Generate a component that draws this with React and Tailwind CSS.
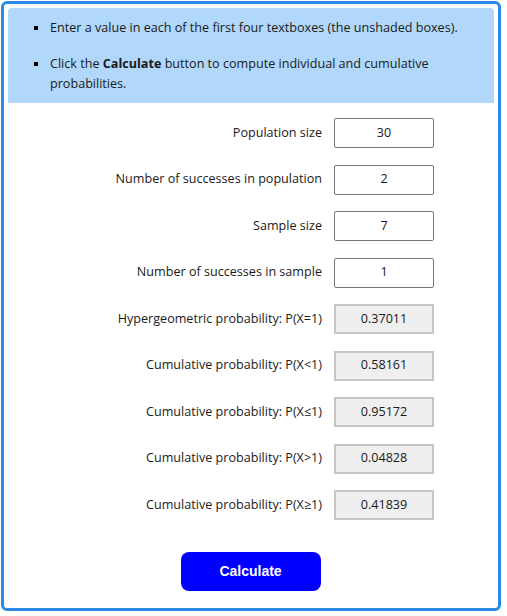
export default function App() {
  const rows = [
    { label: "Population size", value: "30", out: false },
    { label: "Number of successes in population", value: "2", out: false },
    { label: "Sample size", value: "7", out: false },
    { label: "Number of successes in sample", value: "1", out: false },
    { label: "Hypergeometric probability: P(X=1)", value: "0.37011", out: true },
    { label: "Cumulative probability: P(X<1)", value: "0.58161", out: true },
    { label: "Cumulative probability: P(X\u22641)", value: "0.95172", out: true },
    { label: "Cumulative probability: P(X>1)", value: "0.04828", out: true },
    { label: "Cumulative probability: P(X\u22651)", value: "0.41839", out: true },
  ];
  return (
    <div className="bg-white w-[507px] h-[616px] pt-[1px] pl-[1px]" style={{ fontFamily: '"Open Sans", "Noto Sans", sans-serif' }}>
      <div className="w-[500px] h-[610px] border-[3px] border-[#2a8ae6] rounded-[6px] p-[4px] text-[#1a1a1a]">
        <div className="bg-[#b1d8fb] rounded-t-[4px] h-[95px] pl-[26px] pr-3 pt-[10px] text-[12.6px] leading-[20px]">
          <div className="flex">
            <span className="w-[16px] shrink-0 flex items-center"><span className="block w-[4px] h-[4px] bg-black"></span></span>
            <span>Enter a value in each of the first four textboxes (the unshaded boxes).</span>
          </div>
          <div className="flex mt-[16px]">
            <span className="w-[16px] shrink-0 flex h-[20px] items-center"><span className="block w-[4px] h-[4px] bg-black"></span></span>
            <p className="pr-[40px]">Click the <b>Calculate</b> button to compute individual and cumulative probabilities.</p>
          </div>
        </div>
        <div className="flex flex-col gap-[16.5px] mt-[15px]">
          {rows.map((r, i) => (
            <div key={i} className="flex items-center h-[30px]">
              <div className="w-[326px] text-right text-[12.6px] pr-[12px]">{r.label}</div>
              <div
                className={
                  r.out
                    ? "w-[100px] h-[30px] border-2 border-[#c6c6c6] bg-[#efefef] flex items-center justify-center text-[12.6px]"
                    : "w-[100px] h-[30px] border border-[#767676] rounded-[2px] bg-white flex items-center justify-center text-[12.6px]"
                }
              >
                {r.value}
              </div>
            </div>
          ))}
        </div>
        <div className="flex justify-center mt-[32px] pr-[1px]">
          <button className="w-[140px] h-[39px] rounded-[8px] bg-[#0000ff] text-white font-bold text-[14px]" style={{ fontFamily: '"Liberation Sans", Arial, sans-serif' }}>
            Calculate
          </button>
        </div>
      </div>
    </div>
  );
}
